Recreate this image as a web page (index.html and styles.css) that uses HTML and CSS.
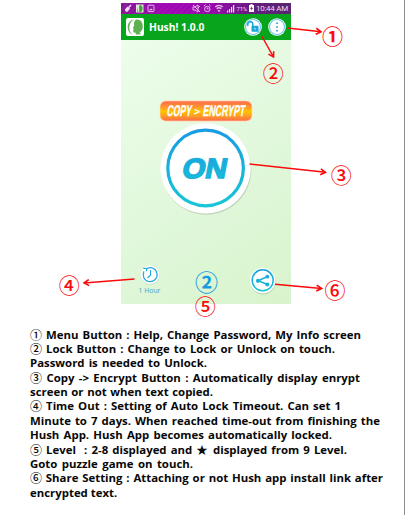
FILE: index.html
```
<!DOCTYPE html>
<html lang="en">
<head>
<meta charset="utf-8">
<title>Hush! guide</title>
<link rel="stylesheet" href="styles.css">
</head>
<body>
<main class="page">
  <section class="phone">
    <div class="status">
      <svg class="status-left" viewBox="0 0 36 11" width="36" height="11">
        <g transform="rotate(40 7 5.5)" fill="#f3dcf5"><rect x="5.3" y="4" width="3.4" height="5" rx="1"/><rect x="6.2" y="1" width="1.6" height="3"/></g>
        <rect x="15" y="1.5" width="7.5" height="8" fill="#d8ead0"/><path d="M19 2c3 0 3.5 5 1 7h-2c1-2-1-5 1-7M16 4v5l1 0" fill="#4b9b49"/>
        <rect x="27" y="2.2" width="6" height="6.4" rx="1" fill="none" stroke="#e3b9e9"/><path d="M28 7.5l2-2 2 1.5z" fill="#f0d8f2"/>
      </svg>
      <svg class="status-icons" viewBox="0 0 44 11" width="44" height="11">
        <g fill="none" stroke="#e0bce6" stroke-width="1">
          <path d="M1 4h2l3-2v7L3 7H1zM1 2l7 7M8 3L6 5"/>
          <circle cx="15.3" cy="6" r="2.7"/><path d="M15.3 4.5V6h1.3M12 3l1.5-1.3M18.6 3l-1.5-1.3"/>
          <path d="M23.3 4c2-2.3 5.4-2.3 7.4 0M24.7 5.7c1.2-1.3 3.4-1.3 4.6 0" stroke-width="1.3"/>
        </g>
        <path d="M25.7 7h2.6L27 9.5z" fill="#e0bce6"/>
        <path d="M35 7.5h1.2v2H35zM37 6h1.2v3.5H37zM39 4h1.2v5.500H39zM41 2h1.2v7.500H41z" fill="#f3dff5"/>
      </svg>
      <span class="percent">71%</span>
      <svg class="battery" viewBox="0 0 5 8" width="5" height="8"><path d="M1.500 0h2v1H5v7H0V1h1.500z" fill="#fff"/><path d="M3 2L1 4.700h1.500L2 7l2-3H2.700z" fill="#4c2363"/></svg>
      <span class="clock">10:44 AM</span>
    </div>
    <header class="bar">
      <svg class="logo" viewBox="0 0 18 18" width="18" height="18">
        <rect width="18" height="18" rx="2" fill="#fff"/>
        <path d="M8.300 1.200C4 2 1.500 5.500 1.700 9.500c.2 3.800 2 6.400 5.300 7.300-3-2-3.800-4.300-3.700-7.500C3.400 6 5 3 8.300 1.200z" fill="#5eb052"/>
        <path d="M10 1.500c4.700-.6 7 3.200 6.800 7.200-.1 2.800-1.300 4.500-3.300 6l1.800 1.500-5.300.3-.7-2H7.500l-.4-2 .6-1.500-.8-1.300 1.300-2C7.600 5 8.300 2.800 10 1.500z" fill="#5eb052"/>
      </svg>
      <h1 class="title">Hush! 1.0.0</h1>
      <svg class="action" viewBox="0 0 18 18" width="18" height="18">
        <circle cx="9" cy="9" r="8.800" fill="#fff"/><circle cx="9" cy="9" r="7.500" fill="none" stroke="#75c9f0" stroke-width="1.200"/>
        <rect x="7.500" y="7.800" width="7" height="6" rx=".8" fill="#1aa6da"/><path d="M8.800 8V6c0-3-5-3-5 0v2" fill="none" stroke="#1aa6da" stroke-width="1.500"/><path d="M11 9.700v2" stroke="#e9faff"/>
      </svg>
      <svg class="action" viewBox="0 0 18 18" width="18" height="18">
        <circle cx="9" cy="9" r="8.800" fill="#fff"/><circle cx="9" cy="9" r="7.500" fill="none" stroke="#75c9f0" stroke-width="1.200"/>
        <path d="M8.200 4.500h1.700V6H8.200zM8.200 8.300h1.700v1.500H8.200zM8.200 12h1.700v1.500H8.200z" fill="#1f9fe0"/>
      </svg>
    </header>
    <div class="screen">
      <svg class="banner" viewBox="0 0 94 22" width="94" height="22">
        <defs><linearGradient id="fire" x2="0" y2="1"><stop stop-color="#ff684b"/><stop offset=".28" stop-color="#ff9133"/><stop offset=".52" stop-color="#ffc400"/><stop offset=".75" stop-color="#ff9a28"/><stop offset="1" stop-color="#ff684b"/></linearGradient></defs>
        <rect x=".8" y=".8" width="92.400" height="20.400" rx="6" fill="url(#fire)" stroke="#fff4d9" stroke-width=".8"/>
        <g transform="translate(7.500 16.400) skewX(-9)"><text class="banner-text" textLength="24.500" lengthAdjust="spacingAndGlyphs">COPY</text><text class="banner-arrow" x="26.800" y="-1.800">&gt;</text><text class="banner-text" x="36" textLength="42" lengthAdjust="spacingAndGlyphs">ENCRYPT</text></g>
      </svg>
      <svg class="on" viewBox="0 0 92 92" width="92" height="92">
        <defs><linearGradient id="sea" x2="0" y2="1"><stop stop-color="#189ce3"/><stop offset="1" stop-color="#18c6d5"/></linearGradient></defs>
        <circle cx="46.300" cy="46.700" r="45" fill="#aebcaa" opacity=".6"/>
        <circle cx="45.600" cy="45.300" r="45.100" fill="#fff"/>
        <circle cx="45.600" cy="45" r="37.800" fill="none" stroke="url(#sea)" stroke-width="3.200"/>
        <g transform="translate(21 55.300) skewX(-11)"><text class="on-text" textLength="44.500" lengthAdjust="spacingAndGlyphs">ON</text></g>
      </svg>
      <div class="tools">
        <div class="timer">
          <svg viewBox="0 0 20 20" width="20" height="20">
            <circle cx="10.200" cy="10.500" r="9.300" fill="#b8c8b4" opacity=".55"/><circle cx="10" cy="9.700" r="9.300" fill="#fff"/>
            <path d="M7.200 3.300A7 7 0 1 1 4 6.300M3.300 3.300l3.500.2-.3 2.800" fill="none" stroke="#20a9df" stroke-width="1.200"/>
            <path d="M10.500 5v5.200L7.500 13" fill="none" stroke="#20a9df" stroke-width="1.100"/>
          </svg>
          <span>1 Hour</span>
        </div>
        <div class="level">②</div>
        <svg class="share" viewBox="0 0 28 28" width="28" height="28">
          <circle cx="14" cy="14.800" r="12.600" fill="#9eae9a" opacity=".6"/><circle cx="13.700" cy="13.700" r="12.700" fill="#fff"/>
          <circle cx="13.700" cy="13.300" r="10.500" fill="none" stroke="url(#sea)" stroke-width="1.500"/>
          <path d="M18 9.800l-8.800 4 8.800 3.400" fill="none" stroke="#1aafd9" stroke-width="1.500"/><g fill="#1aafd9"><circle cx="18.300" cy="9.700" r="1.900"/><circle cx="9" cy="13.800" r="2.100"/><circle cx="18.300" cy="17.400" r="2"/></g>
        </svg>
      </div>
    </div>
  </section>

  <section class="legend">
    <p class="w331"><i>①</i> Menu Button : Help, Change Password, My Info screen</p>
    <p class="w305"><i>②</i> Lock Button : Change to Lock or Unlock on touch.</p>
    <p class="w177">Password is needed to Unlock.</p>
    <p class="w330"><i>③</i> Copy -&gt; Encrypt Button : Automatically display enrypt</p>
    <p class="w183">screen or not when text copied.</p>
    <p class="w311"><i>④</i> Time Out : Setting of Auto Lock Timeout. Can set 1</p>
    <p class="w350">Minute to 7 days. When reached time-out from finishing the</p>
    <p class="w302">Hush App. Hush App becomes automatically locked.</p>
    <p class="w317"><i>⑤</i> Level &nbsp;: 2-8 displayed and <b>★</b> displayed from 9 Level.</p>
    <p class="w163">Goto puzzle game on touch.</p>
    <p class="w353"><i>⑥</i> Share Setting : Attaching or not Hush app install link after</p>
    <p class="w86">encrypted text.</p>
  </section>

  <svg class="notes" viewBox="0 0 405 515" width="405" height="515">
    <defs><marker id="tip" viewBox="0 0 8 8" refX="6.500" refY="4" markerWidth="8" markerHeight="8" markerUnits="userSpaceOnUse" orient="auto"><path d="M1.500 1l5 3-5 3" fill="none" stroke="#fa0a0a" stroke-width="1.600"/></marker></defs>
    <g stroke="#fa0a0a" stroke-width="1.500">
      <path d="M287.500 28L321 31.800" marker-end="url(#tip)"/>
      <path d="M262 36.500L273.500 57" marker-end="url(#tip)"/>
      <path d="M249.500 164L325.500 172.300" marker-end="url(#tip)"/>
      <path d="M134.500 279L84 283" marker-end="url(#tip)"/>
      <path d="M275 284.300L321.500 288.500" marker-end="url(#tip)"/>
    </g>
    <g class="mark">
      <text class="strong" x="332.500" y="44.400">①</text>
      <text x="273.200" y="81.400">②</text>
      <text x="341.200" y="183.400">③</text>
      <text x="69.200" y="293.400">④</text>
      <text x="205.200" y="314.200">⑤</text>
      <text x="335" y="298.300">⑥</text>
    </g>
  </svg>
</main>
</body>
</html>
```
FILE: styles.css
```
* { box-sizing: border-box; }
body { margin: 0; background: #fff; }
.page {
  position: relative;
  width: 405px;
  height: 515px;
  padding-top: 2.500px;
  overflow: hidden;
  border-right: 1px solid #8c8c8c;
  font-family: "Open Sans", "Noto Sans CJK KR", sans-serif;
}
.phone { width: 170px; margin-left: 121px; }
.status {
  display: flex;
  align-items: center;
  height: 11.500px;
  padding-right: 3px;
  color: #f1d9f4;
  background: repeating-linear-gradient(135deg, transparent 0 2px, rgba(70, 0, 100, .13) 2px 4px), linear-gradient(90deg, #8b1c9d, #a80abb 28%, #9b0cae 55%, #652080 78%, #5b2870);
  font: 8px/11px Roboto, sans-serif;
  white-space: nowrap;
}
.status-icons { margin-left: 34.500px; flex: none; }
.status-left, .battery { flex: none; }
.percent { margin-left: 1px; width: 12px; font-size: 6px; letter-spacing: -.2px; }
.clock { margin-left: auto; letter-spacing: -.25px; }
.bar {
  display: flex;
  align-items: center;
  height: 26px;
  padding: 0 5px;
  background: #07a51b;
}
.title {
  flex: 1;
  margin: 0 0 0 5px;
  color: #fff;
  font: bold 10.300px/20px "Noto Sans", sans-serif;
  white-space: nowrap;
}
.action + .action { margin-left: 6px; }
.screen {
  display: flex;
  flex-direction: column;
  align-items: center;
  height: 264px;
  padding-top: 59.500px;
  background: linear-gradient(145deg, #edfeeb, #e1f8dc 52%, #d8f4cc);
}
.banner { display: block; flex: none; }
.banner-text { font: bold 15.500px "Liberation Sans Narrow", "Liberation Sans", sans-serif; fill: #fff; stroke: #fff; stroke-width: .3px; }
.banner-arrow { font: bold 10px "Liberation Sans Narrow", "Liberation Sans", sans-serif; fill: #fff; }
.on { display: block; flex: none; margin-top: 1px; }
.on-text { font: bold 28px "Liberation Sans", sans-serif; fill: url(#sea); stroke: #1ab2dc; stroke-width: 1.500px; }
.tools {
  display: grid;
  grid-template-columns: 57px 57px 56px;
  width: 170px;
  margin-top: 50px;
}
.timer {
  display: flex;
  flex-direction: column;
  align-items: center;
  color: #48a9d8;
  font: 6.800px/9px "Noto Sans", sans-serif;
}
.timer span { margin-top: 1px; }
.level {
  color: #189bdc;
  text-align: center;
  font: bold 23px/32px "Noto Sans CJK KR", sans-serif;
}
.share { margin: 2px 0 0 13.500px; }
.legend { margin: 23.500px 0 0 30px; color: #080808; font-size: 11.400px; font-weight: 700; line-height: 14.400px; }
.legend p { height: 14.400px; margin: 0; white-space: nowrap; text-align: justify; text-align-last: justify; }
.legend i { display: inline-block; width: 12px; vertical-align: -1px; font: 500 12px/12px "Noto Sans CJK KR", sans-serif; }
.legend b { font: 11.400px/12px "Noto Sans CJK KR", sans-serif; }
.w331 { width: 331px; }
.w305 { width: 305px; }
.w177 { width: 177px; }
.w330 { width: 330px; }
.w183 { width: 183px; }
.w311 { width: 311px; }
.w350 { width: 350px; }
.w302 { width: 302px; }
.w317 { width: 317px; }
.w163 { width: 163px; }
.w353 { width: 353px; }
.w86 { width: 86px; }
.notes { position: absolute; left: 0; top: 0; }
.mark { fill: #fa0a0a; font: 500 21px "Noto Sans CJK KR", sans-serif; text-anchor: middle; }
.mark .strong { font-weight: 700; }
```
